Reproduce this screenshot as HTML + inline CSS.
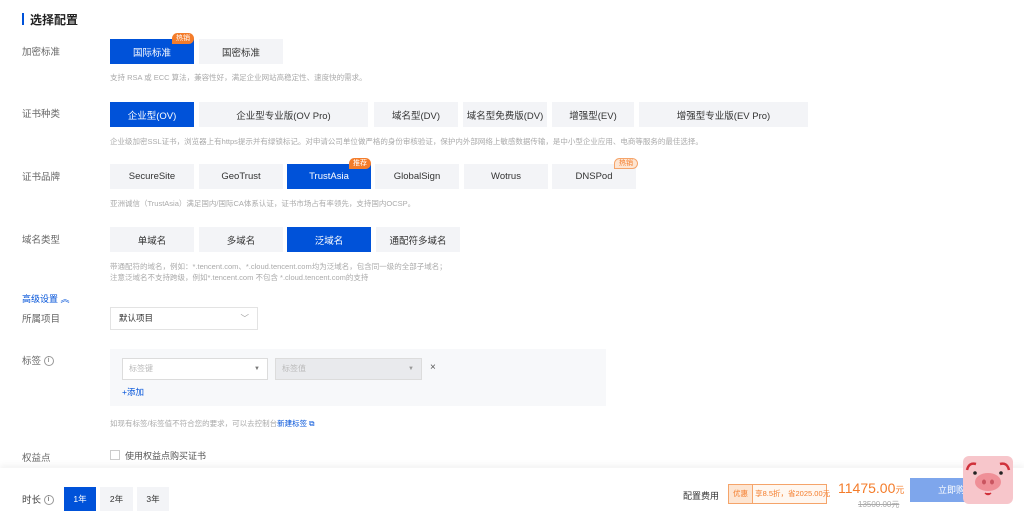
<!DOCTYPE html>
<html><head><meta charset="utf-8"><style>
*{margin:0;padding:0;box-sizing:border-box}
body{width:1024px;height:516px;overflow:hidden;background:#fff;font-family:"Liberation Sans","Noto Sans CJK SC",sans-serif;position:relative;color:#333}
.a{position:absolute;white-space:nowrap}
.lb{font-size:9.5px;color:#666}
.b{position:absolute;height:25px;background:#f3f4f7;color:#333;font-size:9.5px;display:flex;align-items:center;justify-content:center}
.on{background:#0052d9;color:#fff}
.d{font-size:7.5px;color:#aaa}
.bd{position:absolute;height:11px;padding:0 4px;border-radius:6px 6px 6px 0;background:#f47c2a;color:#fff;font-size:7px;line-height:11px}
</style></head><body>
<div class="a" style="left:22px;top:13px;width:2px;height:12px;background:#0052d9"></div>
<div class="a" style="left:30px;top:11px;font-size:12px;font-weight:bold;color:#222">选择配置</div>

<div class="a lb" style="left:22px;top:44px">加密标准</div>
<div class="b on" style="left:110px;top:39px;width:84px">国际标准</div>
<div class="b" style="left:199px;top:39px;width:84px">国密标准</div>
<div class="bd" style="left:172px;top:33px">热销</div>
<div class="a d" style="left:110px;top:72px">支持 RSA 或 ECC 算法，兼容性好，满足企业网站高稳定性、速度快的需求。</div>

<div class="a lb" style="left:22px;top:106px">证书种类</div>
<div class="b on" style="left:110px;top:102px;width:84px">企业型(OV)</div>
<div class="b" style="left:199px;top:102px;width:169px">企业型专业版(OV Pro)</div>
<div class="b" style="left:374px;top:102px;width:84px">域名型(DV)</div>
<div class="b" style="left:463px;top:102px;width:84px">域名型免费版(DV)</div>
<div class="b" style="left:552px;top:102px;width:82px">增强型(EV)</div>
<div class="b" style="left:639px;top:102px;width:169px">增强型专业版(EV Pro)</div>
<div class="a d" style="left:110px;top:136px">企业级加密SSL证书，浏览器上有https提示并有绿锁标记。对申请公司单位做严格的身份审核验证，保护内外部网络上敏感数据传输，是中小型企业应用、电商等服务的最佳选择。</div>

<div class="a lb" style="left:22px;top:169px">证书品牌</div>
<div class="b" style="left:110px;top:164px;width:84px">SecureSite</div>
<div class="b" style="left:199px;top:164px;width:84px">GeoTrust</div>
<div class="b on" style="left:287px;top:164px;width:84px">TrustAsia</div>
<div class="b" style="left:375px;top:164px;width:84px">GlobalSign</div>
<div class="b" style="left:464px;top:164px;width:84px">Wotrus</div>
<div class="b" style="left:552px;top:164px;width:84px">DNSPod</div>
<div class="bd" style="left:349px;top:158px">推荐</div>
<div class="bd" style="left:614px;top:158px;background:#fde5d2;color:#f47c2a;border:1px solid #f5a46a;line-height:9px">热销</div>
<div class="a d" style="left:110px;top:198px">亚洲诚信（TrustAsia）满足国内/国际CA体系认证，证书市场占有率领先，支持国内OCSP。</div>

<div class="a lb" style="left:22px;top:232px">域名类型</div>
<div class="b" style="left:110px;top:227px;width:84px">单域名</div>
<div class="b" style="left:199px;top:227px;width:84px">多域名</div>
<div class="b on" style="left:287px;top:227px;width:84px">泛域名</div>
<div class="b" style="left:376px;top:227px;width:84px">通配符多域名</div>
<div class="a d" style="left:110px;top:261px">带通配符的域名，例如：*.tencent.com、*.cloud.tencent.com均为泛域名，包含同一级的全部子域名；</div>
<div class="a d" style="left:110px;top:272px">注意泛域名不支持跨级，例如*.tencent.com 不包含 *.cloud.tencent.com的支持</div>

<div class="a" style="left:22px;top:292px;font-size:9px;color:#0052d9">高级设置 ︽</div>
<div class="a lb" style="left:22px;top:311px">所属项目</div>
<div class="a" style="left:110px;top:307px;width:148px;height:23px;border:1px solid #e3e3e3;font-size:8.5px;line-height:21px;padding-left:8px;color:#333">默认项目<span style="position:absolute;right:8px;color:#999">﹀</span></div>

<div class="a lb" style="left:22px;top:353px">标签 <span style="display:inline-block;width:10px;height:10px;border:1px solid #999;border-radius:50%;font-size:7px;text-align:center;line-height:8px;vertical-align:middle">i</span></div>
<div class="a" style="left:110px;top:349px;width:496px;height:57px;background:#f7f8fa"></div>
<div class="a" style="left:122px;top:358px;width:146px;height:22px;background:#fff;border:1px solid #dcdcdc;font-size:8px;color:#bbb;line-height:20px;padding-left:6px">标签键<span style="position:absolute;right:7px;color:#777;font-size:6px">▼</span></div>
<div class="a" style="left:275px;top:358px;width:147px;height:22px;background:#e9eaed;border:1px solid #dcdcdc;font-size:8px;color:#bbb;line-height:20px;padding-left:6px">标签值<span style="position:absolute;right:7px;color:#999;font-size:6px">▼</span></div>
<div class="a" style="left:430px;top:362px;font-size:10px;color:#555">×</div>
<div class="a" style="left:122px;top:386px;font-size:8.5px;color:#0052d9">+添加</div>
<div class="a d" style="left:110px;top:418px">如现有标签/标签值不符合您的要求，可以去控制台<span style="color:#0052d9">新建标签 ⧉</span></div>

<div class="a lb" style="left:22px;top:450px">权益点</div>
<div class="a" style="left:110px;top:450px;width:10px;height:10px;border:1px solid #ccc"></div>
<div class="a" style="left:125px;top:449px;font-size:9px;color:#555">使用权益点购买证书</div>

<div class="a" style="left:0;top:468px;width:1024px;height:48px;background:#fff;box-shadow:0 -3px 6px rgba(0,0,0,0.05)"></div>
<div class="a lb" style="left:22px;top:492px;color:#444">时长 <span style="display:inline-block;width:10px;height:10px;border:1px solid #999;border-radius:50%;font-size:7px;text-align:center;line-height:8px;vertical-align:middle">i</span></div>
<div class="b on" style="left:64px;top:487px;width:32px;height:24px;font-size:8.5px">1年</div>
<div class="b" style="left:100px;top:487px;width:33px;height:24px;font-size:8.5px">2年</div>
<div class="b" style="left:137px;top:487px;width:32px;height:24px;font-size:8.5px">3年</div>
<div class="a" style="left:683px;top:489px;font-size:9px;color:#333">配置费用</div>
<div class="a" style="left:728px;top:484px;width:99px;height:20px;border:1px solid #f5a46a;background:#fff7f0;font-size:7.5px;color:#f47c2a;line-height:18px"><span style="display:inline-block;background:#fde5d2;padding:0 4px;border-right:1px solid #f5a46a">优惠</span> 享8.5折，省2025.00元</div>
<div class="a" style="left:838px;top:480px;font-size:14px;color:#f47c2a">11475.00<span style="font-size:9px">元</span></div>
<div class="a" style="left:858px;top:499px;font-size:8px;color:#aaa;text-decoration:line-through">13500.00元</div>
<div class="a" style="left:910px;top:478px;width:100px;height:24px;background:#7ea6ec;color:#fff;font-size:9px;line-height:24px;padding-left:28px">立即购买</div>
<div class="a" style="left:963px;top:456px;width:50px;height:48px;background:#f7c6cb;border-radius:6px">
<svg width="50" height="48" viewBox="0 0 50 48"><path d="M4 14 Q6 6 13 8" stroke="#d0303a" stroke-width="2.5" fill="none"/><path d="M46 14 Q44 6 37 8" stroke="#d0303a" stroke-width="2.5" fill="none"/><circle cx="12" cy="17" r="1.8" fill="#222"/><circle cx="38" cy="17" r="1.8" fill="#222"/><ellipse cx="25" cy="26" rx="13" ry="9" fill="#ef8f97"/><ellipse cx="21" cy="26" rx="2" ry="2.5" fill="#c95560"/><ellipse cx="29" cy="26" rx="2" ry="2.5" fill="#c95560"/><path d="M22 37 Q25 40 28 37" stroke="#d0303a" stroke-width="1.5" fill="#d0303a"/></svg></div>
</body></html>
